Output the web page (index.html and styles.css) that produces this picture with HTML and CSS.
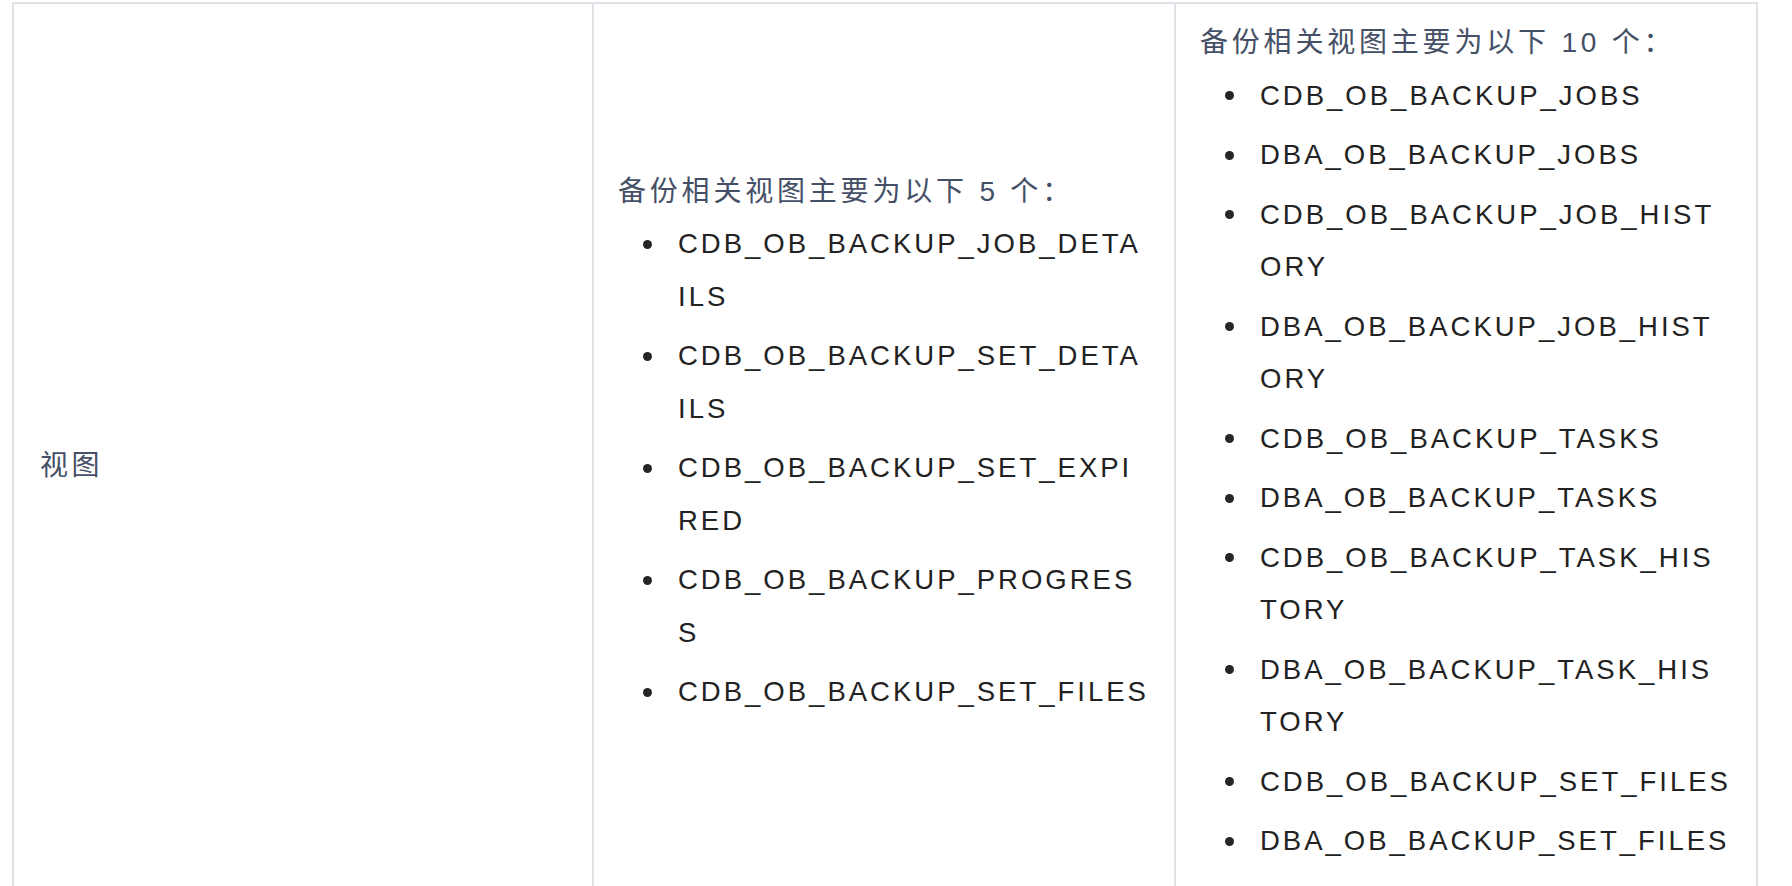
FILE: index.html
```html
<!DOCTYPE html>
<html lang="zh-CN">
<head>
<meta charset="utf-8">
<title>备份视图</title>
<link rel="stylesheet" href="styles.css">
</head>
<body>
<div class="doc">
  <table class="spec">
    <colgroup>
      <col class="c1">
      <col class="c2">
      <col class="c3">
    </colgroup>
    <tbody>
      <tr>
        <td class="label">视图</td>
        <td>
          <p class="lead">备份相关视图主要为以下 5 个：</p>
          <ul class="views">
            <li>CDB_OB_BACKUP_JOB_DETAILS</li>
            <li>CDB_OB_BACKUP_SET_DETAILS</li>
            <li>CDB_OB_BACKUP_SET_EXPIRED</li>
            <li>CDB_OB_BACKUP_PROGRESS</li>
            <li>CDB_OB_BACKUP_SET_FILES</li>
          </ul>
        </td>
        <td>
          <p class="lead">备份相关视图主要为以下 10 个：</p>
          <ul class="views">
            <li>CDB_OB_BACKUP_JOBS</li>
            <li>DBA_OB_BACKUP_JOBS</li>
            <li>CDB_OB_BACKUP_JOB_HISTORY</li>
            <li>DBA_OB_BACKUP_JOB_HISTORY</li>
            <li>CDB_OB_BACKUP_TASKS</li>
            <li>DBA_OB_BACKUP_TASKS</li>
            <li>CDB_OB_BACKUP_TASK_HISTORY</li>
            <li>DBA_OB_BACKUP_TASK_HISTORY</li>
            <li>CDB_OB_BACKUP_SET_FILES</li>
            <li>DBA_OB_BACKUP_SET_FILES</li>
          </ul>
        </td>
      </tr>
    </tbody>
  </table>
</div>
</body>
</html>
```

FILE: styles.css
```css
html, body {
  margin: 0;
  padding: 0;
  background: #ffffff;
  overflow: hidden;
}

body {
  font-family: "Liberation Sans", "Noto Sans CJK SC", sans-serif;
  font-size: 27.5px;
  letter-spacing: 3px;
  line-height: 52.5px;
  color: #222222;
}

.doc {
  padding: 2px 0 0 12px;
}

.spec {
  width: 1746px;
  table-layout: fixed;
  border-collapse: separate;
  border-spacing: 0;
  border-top: 2px solid #dfe3e8;
  border-left: 2px solid #dfe3e8;
}

.c1 { width: 580px; }
.c2 { width: 582px; }
.c3 { width: 582px; }

.spec td {
  box-sizing: border-box;
  vertical-align: middle;
  padding: 13px 25px 13px 24px;
  border-right: 2px solid #dfe3e8;
  border-bottom: 2px solid #dfe3e8;
  word-break: break-all;
}

.spec td.label {
  padding-left: 26px;
  font-size: 28px;
  letter-spacing: 3.5px;
  color: #454f66;
}

.lead {
  margin: 0;
  font-size: 28px;
  letter-spacing: 3.8px;
  color: #454f66;
}

.views {
  margin: 0 0 48px 0;
  padding-left: 60px;
  list-style: none;
}

.views li {
  position: relative;
}

.views li::before {
  content: "";
  position: absolute;
  left: -35px;
  top: 21.5px;
  width: 9px;
  height: 9px;
  border-radius: 50%;
  background: #262626;
}

.views li + li {
  margin-top: 7px;
}
```
